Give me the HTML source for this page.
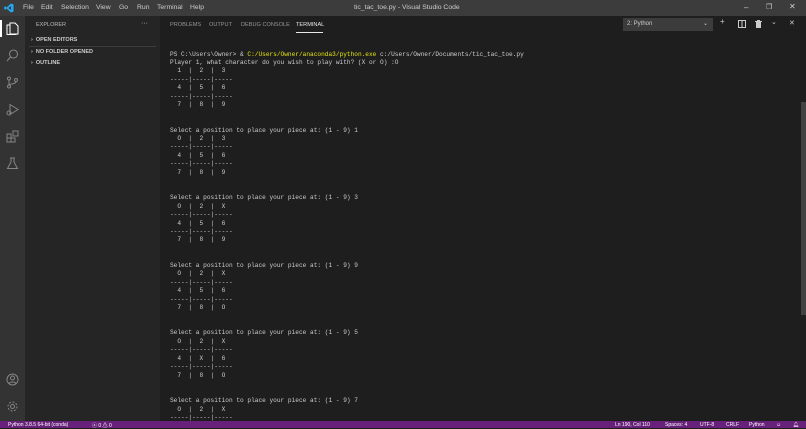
<!DOCTYPE html>
<html><head><style>
*{margin:0;padding:0;box-sizing:border-box}
body{width:806px;height:428px;overflow:hidden;background:#1e1e1e;font-family:"Liberation Sans",sans-serif;position:relative}
.abs{position:absolute}
#title{left:0;top:0;width:806px;height:16px;background:#3c3c3c;color:#ccc;font-size:6.8px}
#title span{position:absolute;top:4px}
#act{left:0;top:16px;width:25px;height:405px;background:#333}
#side{left:25px;top:16px;width:135px;height:405px;background:#252526;color:#ccc;font-size:5.5px}
#side div{position:absolute;left:6px}
#tabs{left:160px;top:16px;font-size:5.6px;color:#969696}
#tabs span{position:absolute;top:6px;white-space:nowrap}
pre{position:absolute;left:170px;top:50.5px;font-family:"Liberation Mono",monospace;font-size:6.15px;line-height:8.45px;color:#ccc;white-space:pre}
.y{color:#e5e510}
#status{left:0;top:421px;width:806px;height:7px;background:#68217a;color:#fff;font-size:5px}
#status span{position:absolute;top:0.5px;white-space:nowrap}
svg{position:absolute}
</style></head><body>
<div id="title" class="abs">
<svg style="left:4px;top:3px" width="10" height="10" viewBox="0 0 10 10"><path d="M7 0.5L9.5 1.5V8.5L7 9.5L2.5 5.5L1 6.7L0.3 6.3V3.7L1 3.3L2.5 4.5L7 0.5ZM7 3L4.3 5L7 7Z" fill="#23a9f2"/></svg>
<span style="left:23px">File</span><span style="left:41px">Edit</span><span style="left:61px">Selection</span><span style="left:96px">View</span><span style="left:119px">Go</span><span style="left:137px">Run</span><span style="left:157px">Terminal</span><span style="left:190px">Help</span>
<span style="left:354px">tic_tac_toe.py - Visual Studio Code</span>
<span style="left:744px;top:3px;font-size:8px">–</span><span style="left:766px;top:3px;font-size:7px">❐</span><span style="left:789px;top:2px;font-size:8px">✕</span>
</div>
<div id="act" class="abs">
<div class="abs" style="left:0;top:4px;width:1.5px;height:17px;background:#fff"></div>
<svg style="left:6px;top:6px" width="13" height="13" viewBox="0 0 13 13" fill="none" stroke="#fff" stroke-width="1"><path d="M4 3V1h5l3 3v8H4z M1 3h3v9h6v0.5H1z"/></svg>
<svg style="left:6px;top:33px" width="13" height="13" viewBox="0 0 13 13" fill="none" stroke="#858585" stroke-width="1.1"><circle cx="7.5" cy="5" r="4"/><path d="M4.5 8L1 12"/></svg>
<svg style="left:6px;top:60px" width="13" height="13" viewBox="0 0 13 13" fill="none" stroke="#858585" stroke-width="1"><circle cx="3" cy="2.5" r="1.5"/><circle cx="3" cy="10.5" r="1.5"/><circle cx="10" cy="4" r="1.5"/><path d="M3 4v5M10 5.5c0 3-7 2-7 3.5"/></svg>
<svg style="left:6px;top:87px" width="13" height="13" viewBox="0 0 13 13" fill="none" stroke="#858585" stroke-width="1"><path d="M4 1.5L12 6.5L4 11.5z"/><circle cx="3" cy="10" r="2"/></svg>
<svg style="left:6px;top:114px" width="13" height="13" viewBox="0 0 13 13" fill="none" stroke="#858585" stroke-width="1"><path d="M1 4h4v4h4v4H1z M1 8h4v4 M7 1h5v5H7z"/></svg>
<svg style="left:6px;top:141px" width="13" height="13" viewBox="0 0 13 13" fill="none" stroke="#858585" stroke-width="1"><path d="M4 1h5M5 1v4L1.5 11.5h10L8 5V1"/></svg>
<svg style="left:6px;top:357px" width="13" height="13" viewBox="0 0 13 13" fill="none" stroke="#858585" stroke-width="1"><circle cx="6.5" cy="6.5" r="5.5"/><circle cx="6.5" cy="5" r="2"/><path d="M3 10.5c1-2 6-2 7 0"/></svg>
<svg style="left:6px;top:384px" width="13" height="13" viewBox="0 0 13 13" fill="none" stroke="#858585" stroke-width="1"><circle cx="6.5" cy="6.5" r="2"/><circle cx="6.5" cy="6.5" r="4.5" stroke-dasharray="2 1.5"/></svg>
</div>
<div id="side" class="abs">
<div style="top:6px;left:11px;color:#bbb">EXPLORER</div><div style="top:4px;left:116px;font-size:7px">···</div>
<div style="top:21px;font-weight:bold">›&nbsp; OPEN EDITORS</div>
<div style="top:30px;width:127px;height:1px;left:4px;background:#3c3c3c"></div>
<div style="top:33px;font-weight:bold">›&nbsp; NO FOLDER OPENED</div>
<div style="top:44px;font-weight:bold">›&nbsp; OUTLINE</div>
</div>
<div id="tabs" class="abs">
<span style="left:10px">PROBLEMS</span><span style="left:49px">OUTPUT</span><span style="left:81px">DEBUG CONSOLE</span><span style="left:136px;color:#e7e7e7">TERMINAL</span>
<div class="abs" style="left:136px;top:16px;width:27px;height:1px;background:#e7e7e7"></div>
</div>
<div class="abs" style="left:623px;top:18px;width:90px;height:13px;background:#3c3c3c;color:#ccc;font-size:6px;padding:3px 4px">2: Python<span style="position:absolute;right:5px;top:2px">⌄</span></div>
<div class="abs" style="left:720px;top:17px;color:#ccc;font-size:8px">+</div>
<svg style="left:738px;top:20px" width="8" height="8" viewBox="0 0 8 8" fill="none" stroke="#ccc"><rect x="0.5" y="0.5" width="7" height="7"/><path d="M4 0v8"/></svg>
<svg style="left:755px;top:20px" width="7" height="8" viewBox="0 0 7 8" fill="#ccc"><rect x="1" y="2" width="5" height="6"/><rect x="0" y="1" width="7" height="1"/><rect x="2" y="0" width="3" height="1"/></svg>
<div class="abs" style="left:771px;top:18px;color:#ccc;font-size:7px">⌄</div>
<div class="abs" style="left:789px;top:19px;color:#ccc;font-size:7px">✕</div>
<pre>PS C:\Users\Owner&gt; &amp; <span class="y">C:/Users/Owner/anaconda3/python.exe</span> c:/Users/Owner/Documents/tic_tac_toe.py
Player 1, what character do you wish to play with? (X or O) :O
  1  |  2  |  3
-----|-----|-----
  4  |  5  |  6
-----|-----|-----
  7  |  8  |  9


Select a position to place your piece at: (1 - 9) 1
  O  |  2  |  3
-----|-----|-----
  4  |  5  |  6
-----|-----|-----
  7  |  8  |  9


Select a position to place your piece at: (1 - 9) 3
  O  |  2  |  X
-----|-----|-----
  4  |  5  |  6
-----|-----|-----
  7  |  8  |  9


Select a position to place your piece at: (1 - 9) 9
  O  |  2  |  X
-----|-----|-----
  4  |  5  |  6
-----|-----|-----
  7  |  8  |  O


Select a position to place your piece at: (1 - 9) 5
  O  |  2  |  X
-----|-----|-----
  4  |  X  |  6
-----|-----|-----
  7  |  8  |  O


Select a position to place your piece at: (1 - 9) 7
  O  |  2  |  X
-----|-----|-----</pre>
<div class="abs" style="left:801px;top:102px;width:5px;height:213px;background:#424242"></div>
<div id="status" class="abs">
<span style="left:8px">Python 3.8.5 64-bit (conda)</span><span style="left:92px">ⓧ 0 ⚠ 0</span>
<span style="left:615px">Ln 190, Col 110</span><span style="left:665px">Spaces: 4</span><span style="left:700px">UTF-8</span><span style="left:726px">CRLF</span><span style="left:749px">Python</span><span style="left:776px">☺</span><span style="left:793px">🔔︎</span>
</div>
</body></html>
